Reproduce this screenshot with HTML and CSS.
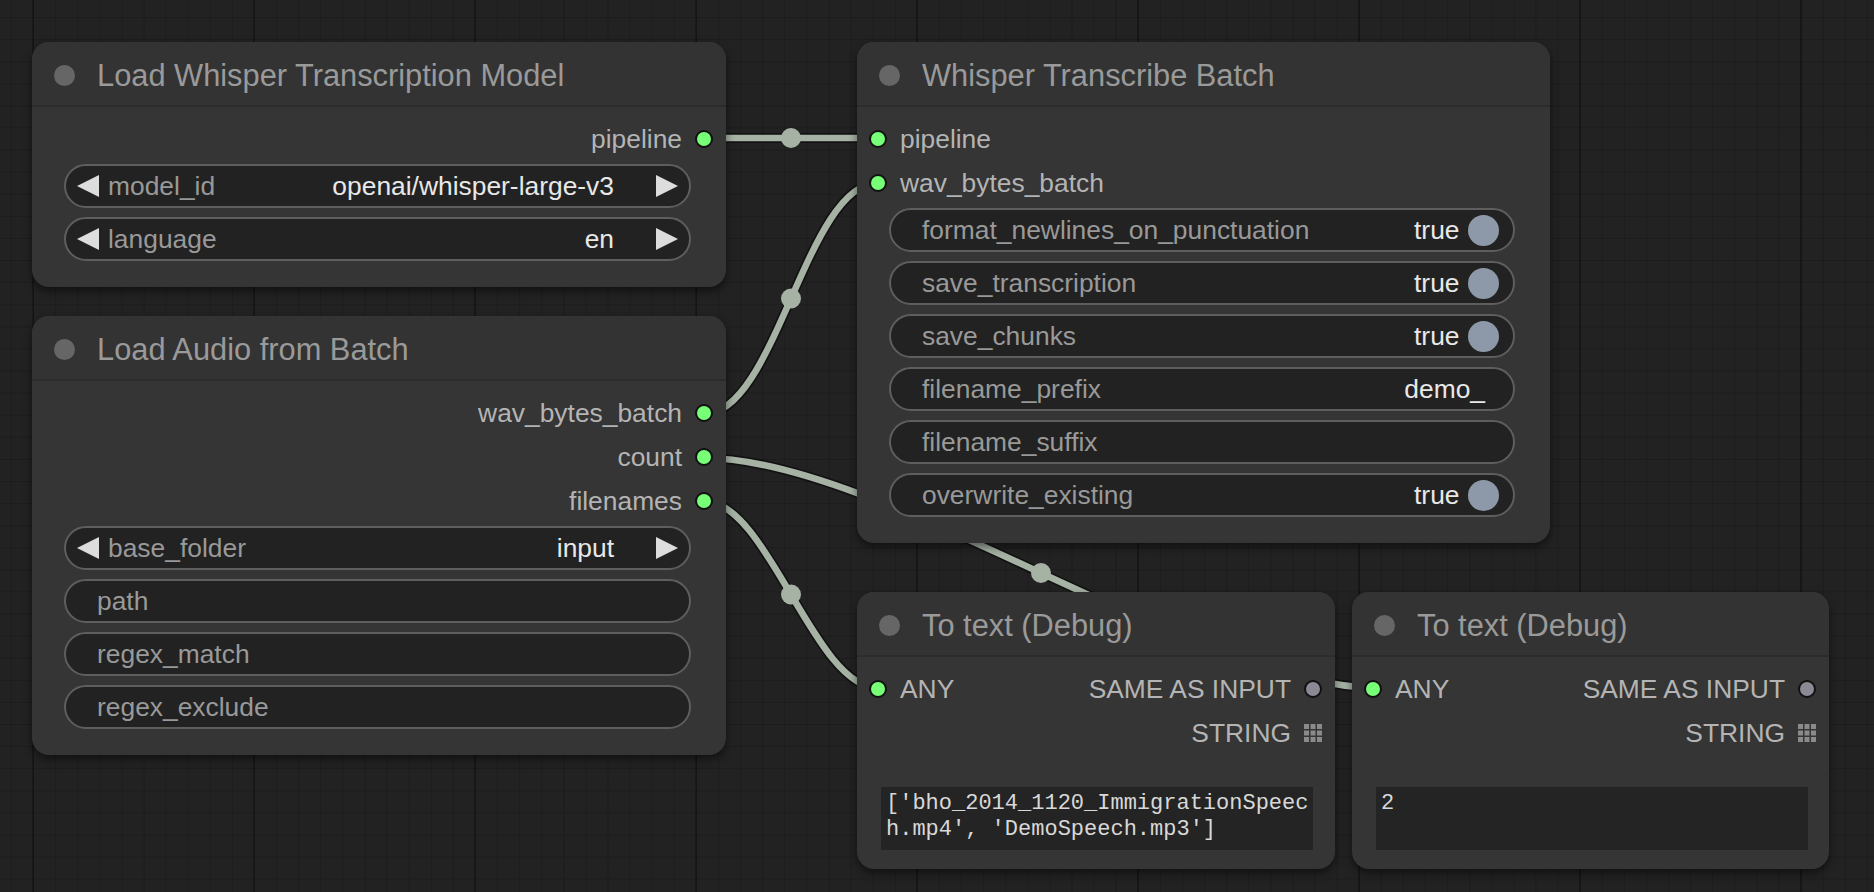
FILE: index.html
```html
<!DOCTYPE html>
<html>
<head>
<meta charset="utf-8">
<title>ComfyUI Whisper</title>
<link rel="stylesheet" href="styles.css">
</head>
<body>
<div class="canvas">
  <svg class="links" width="1874" height="892" viewBox="0 0 1874 892">
    <g class="link-shadow">
      <path d="M704,138 C747,138 834,138 878,138"/>
      <path d="M704,414 C776,414 806,183 878,183"/>
      <path d="M704,458 C882,458 1200,688 1378,688"/>
      <path d="M704,501 C768,501 814,688 878,688"/>
    </g>
    <g class="link-line">
      <path d="M704,138 C747,138 834,138 878,138"/>
      <path d="M704,414 C776,414 806,183 878,183"/>
      <path d="M704,458 C882,458 1200,688 1378,688"/>
      <path d="M704,501 C768,501 814,688 878,688"/>
    </g>
    <g class="link-mid">
      <circle cx="791" cy="138" r="10"/>
      <circle cx="791" cy="298.5" r="10"/>
      <circle cx="1041" cy="573" r="10"/>
      <circle cx="791" cy="594.5" r="10"/>
    </g>
  </svg>

  <div class="node n1">
    <div class="title"><span class="tdot"></span><span class="ttext">Load Whisper Transcription Model</span></div>
    <div class="slots">
      <div class="slot"><div class="side out"><span>pipeline</span><span class="dot"></span></div></div>
    </div>
    <div class="widgets">
      <div class="widget combo"><span class="arrow l"></span><span class="wl">model_id</span><span class="wv">openai/whisper-large-v3</span><span class="arrow r"></span></div>
      <div class="widget combo"><span class="arrow l"></span><span class="wl">language</span><span class="wv">en</span><span class="arrow r"></span></div>
    </div>
  </div>

  <div class="node n2">
    <div class="title"><span class="tdot"></span><span class="ttext">Whisper Transcribe Batch</span></div>
    <div class="slots">
      <div class="slot"><div class="side in"><span class="dot"></span><span>pipeline</span></div></div>
      <div class="slot"><div class="side in"><span class="dot"></span><span>wav_bytes_batch</span></div></div>
    </div>
    <div class="widgets">
      <div class="widget toggle"><span class="wl">format_newlines_on_punctuation</span><span class="wv">true</span><span class="knob"></span></div>
      <div class="widget toggle"><span class="wl">save_transcription</span><span class="wv">true</span><span class="knob"></span></div>
      <div class="widget toggle"><span class="wl">save_chunks</span><span class="wv">true</span><span class="knob"></span></div>
      <div class="widget text"><span class="wl">filename_prefix</span><span class="wv">demo_</span></div>
      <div class="widget text"><span class="wl">filename_suffix</span><span class="wv"></span></div>
      <div class="widget toggle"><span class="wl">overwrite_existing</span><span class="wv">true</span><span class="knob"></span></div>
    </div>
  </div>

  <div class="node n3">
    <div class="title"><span class="tdot"></span><span class="ttext">Load Audio from Batch</span></div>
    <div class="slots">
      <div class="slot"><div class="side out"><span>wav_bytes_batch</span><span class="dot"></span></div></div>
      <div class="slot"><div class="side out"><span>count</span><span class="dot"></span></div></div>
      <div class="slot"><div class="side out"><span>filenames</span><span class="dot"></span></div></div>
    </div>
    <div class="widgets">
      <div class="widget combo"><span class="arrow l"></span><span class="wl">base_folder</span><span class="wv">input</span><span class="arrow r"></span></div>
      <div class="widget text"><span class="wl">path</span><span class="wv"></span></div>
      <div class="widget text"><span class="wl">regex_match</span><span class="wv"></span></div>
      <div class="widget text"><span class="wl">regex_exclude</span><span class="wv"></span></div>
    </div>
  </div>

  <div class="node n4">
    <div class="title"><span class="tdot"></span><span class="ttext">To text (Debug)</span></div>
    <div class="slots">
      <div class="slot"><div class="side in"><span class="dot"></span><span>ANY</span></div><div class="side out"><span>SAME AS INPUT</span><span class="dot empty"></span></div></div>
      <div class="slot"><div class="side out"><span>STRING</span><svg class="gridicon" width="18" height="18" viewBox="0 0 18 18"><rect x="0" y="0" width="5" height="5"/><rect x="6.5" y="0" width="5" height="5"/><rect x="13" y="0" width="5" height="5"/><rect x="0" y="6.5" width="5" height="5"/><rect x="6.5" y="6.5" width="5" height="5"/><rect x="13" y="6.5" width="5" height="5"/><rect x="0" y="13" width="5" height="5"/><rect x="6.5" y="13" width="5" height="5"/><rect x="13" y="13" width="5" height="5"/></svg></div></div>
    </div>
    <div class="textarea">['bho_2014_1120_ImmigrationSpeech.mp4', 'DemoSpeech.mp3']</div>
  </div>

  <div class="node n5">
    <div class="title"><span class="tdot"></span><span class="ttext">To text (Debug)</span></div>
    <div class="slots">
      <div class="slot"><div class="side in"><span class="dot"></span><span>ANY</span></div><div class="side out"><span>SAME AS INPUT</span><span class="dot empty"></span></div></div>
      <div class="slot"><div class="side out"><span>STRING</span><svg class="gridicon" width="18" height="18" viewBox="0 0 18 18"><rect x="0" y="0" width="5" height="5"/><rect x="6.5" y="0" width="5" height="5"/><rect x="13" y="0" width="5" height="5"/><rect x="0" y="6.5" width="5" height="5"/><rect x="6.5" y="6.5" width="5" height="5"/><rect x="13" y="6.5" width="5" height="5"/><rect x="0" y="13" width="5" height="5"/><rect x="6.5" y="13" width="5" height="5"/><rect x="13" y="13" width="5" height="5"/></svg></div></div>
    </div>
    <div class="textarea t2">2</div>
  </div>
</div>
</body>
</html>
```
FILE: styles.css
```css
html, body {
  margin: 0;
  padding: 0;
  background: #222;
}

.canvas {
  position: relative;
  width: 1874px;
  height: 892px;
  overflow: hidden;
  background-color: #222;
  background-image:
    linear-gradient(90deg, rgba(0,0,0,0.28) 2px, transparent 2px),
    linear-gradient(90deg, rgba(0,0,0,0.16) 1px, transparent 1px),
    linear-gradient(rgba(0,0,0,0.16) 1px, transparent 1px);
  background-size: 221px 221px, 22.1px 22.1px, 22.1px 22.1px;
  background-position: 32px 0, 11px 0, 0 17px;
  font-family: "Liberation Sans", Arial, sans-serif;
}

.links {
  position: absolute;
  left: 0;
  top: 0;
}

.link-shadow path {
  fill: none;
  stroke: rgba(0,0,0,0.45);
  stroke-width: 10;
}

.link-line path {
  fill: none;
  stroke: #a5b2a4;
  stroke-width: 6.6;
}

.link-mid circle {
  fill: #a5b2a4;
}

.node {
  position: absolute;
  background: #353535;
  border-radius: 17px;
  box-shadow: 0 4px 8px rgba(0,0,0,0.5);
}

.n1 { left: 32px; top: 42px; width: 694px; }
.n2 { left: 857px; top: 42px; width: 693px; }
.n3 { left: 32px; top: 316px; width: 694px; }
.n4 { left: 857px; top: 592px; width: 478px; }
.n5 { left: 1352px; top: 592px; width: 477px; }

.title {
  height: 65px;
  box-sizing: border-box;
  display: flex;
  align-items: center;
  padding: 4px 0 0 22px;
  background: #333;
  border-bottom: 2px solid #2c2c2c;
  border-radius: 17px 17px 0 0;
}

.tdot {
  width: 21px;
  height: 21px;
  border-radius: 50%;
  background: #666;
  margin-right: 22px;
  flex: none;
}

.ttext {
  font-size: 30.8px;
  color: #9a9a9a;
  white-space: nowrap;
}

.slots {
  padding-top: 10px;
}

.slot {
  height: 44px;
  display: flex;
  align-items: center;
  padding: 0 13px 0 12px;
  font-size: 26.4px;
  color: #b4b4b4;
  white-space: nowrap;
}

.side {
  display: flex;
  align-items: center;
  gap: 13px;
}

.side.out {
  margin-left: auto;
}

.dot {
  width: 18px;
  height: 18px;
  box-sizing: border-box;
  border-radius: 50%;
  border: 2px solid #111;
  background: #7f7;
  flex: none;
}

.dot.empty {
  background: #8a8a94;
}

.gridicon {
  flex: none;
  fill: #8a8a8a;
}

.widgets {
  display: flex;
  flex-direction: column;
  gap: 9px;
  padding: 3px 35px 26px 32px;
}

.widget {
  height: 44px;
  box-sizing: border-box;
  border: 2px solid #5e5e5e;
  border-radius: 22px;
  background: #222;
  display: flex;
  align-items: center;
  font-size: 26.4px;
  color: #999;
  white-space: nowrap;
}

.wl {
  flex: 1;
}

.wv {
  color: #e8e8e8;
}

.combo {
  padding: 0 11px;
}

.combo .wl {
  margin-left: 9px;
}

.combo .wv {
  margin-right: 42px;
}

.arrow {
  width: 0;
  height: 0;
  border-top: 11px solid transparent;
  border-bottom: 11px solid transparent;
  flex: none;
}

.arrow.l {
  border-right: 22px solid #ddd;
}

.arrow.r {
  border-left: 22px solid #ddd;
}

.text {
  padding: 0 28px 0 31px;
}

.toggle {
  padding: 0 14.5px 0 31px;
}

.toggle .wv {
  margin-right: 8px;
}

.knob {
  width: 31px;
  height: 31px;
  border-radius: 50%;
  background: #8d99a8;
  flex: none;
}

.textarea {
  margin: 32px 22px 19px 24px;
  height: 63px;
  box-sizing: border-box;
  padding: 4px 0 0 5px;
  background: #242424;
  color: #d8d8d8;
  font-family: "Liberation Mono", "DejaVu Sans Mono", monospace;
  font-size: 22px;
  line-height: 26.4px;
  word-break: break-all;
  overflow: hidden;
}

.textarea.t2 {
  margin: 32px 21px 19px 24px;
}
```
